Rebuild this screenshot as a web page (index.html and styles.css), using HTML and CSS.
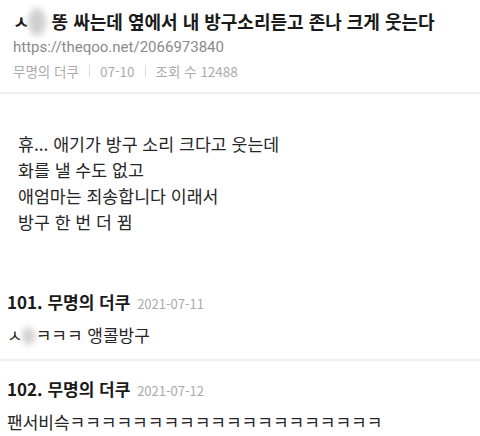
FILE: index.html
```html
<!DOCTYPE html>
<html lang="ko">
<head>
    <meta charset="UTF-8">
    <meta name="viewport" content="width=device-width, initial-scale=1.0">
    <title>theqoo</title>
    <link rel="stylesheet" href="styles.css">
</head>
<body>
    <div class="post-head">
        <h1 class="title">ㅅ<span class="blur"></span> 똥 싸는데 옆에서 내 방구소리듣고 존나 크게 웃는다</h1>
        <div class="url">https://theqoo.net/2066973840</div>
        <div class="meta">
            <span>무명의 더쿠</span>
            <span class="bar"></span>
            <span>07-10</span>
            <span class="bar"></span>
            <span>조회 수 12488</span>
        </div>
    </div>

    <div class="content">
        <p>휴... 애기가 방구 소리 크다고 웃는데</p>
        <p>화를 낼 수도 없고</p>
        <p>애엄마는 죄송합니다 이래서</p>
        <p>방구 한 번 더 뀜</p>
    </div>

    <ul class="comments">
        <li class="comment">
            <div class="comment-head"><b>101. 무명의 더쿠</b> <span class="date">2021-07-11</span></div>
            <div class="comment-text">ㅅ<span class="blur small"></span>ㅋㅋㅋ 앵콜방구</div>
        </li>
        <li class="comment">
            <div class="comment-head"><b>102. 무명의 더쿠</b> <span class="date">2021-07-12</span></div>
            <div class="comment-text">팬서비슥ㅋㅋㅋㅋㅋㅋㅋㅋㅋㅋㅋㅋㅋㅋㅋㅋㅋㅋㅋㅋ</div>
        </li>
    </ul>
</body>
</html>
```

FILE: styles.css
```css
body {
    font-family: 'Noto Sans CJK KR', 'Noto Sans', sans-serif;
    margin: 0;
    background-color: #ffffff;
    color: #222222;
}
.post-head {
    padding: 8px 13px 0;
    height: 84px;
    border-bottom: 2px solid #f0f0f0;
}
.title {
    font-size: 18px;
    font-weight: bold;
    line-height: 24px;
    margin: 0;
    color: #1a1a1a;
    white-space: nowrap;
}
.blur {
    display: inline-block;
    width: 18px;
    height: 28px;
    margin: 0 1px 0 -2px;
    vertical-align: -7px;
    border-radius: 50%;
    background-color: #d0d0d0;
    filter: blur(3px);
}
.blur.small {
    width: 13px;
    height: 18px;
    margin: 0 1px 0 -1px;
    vertical-align: -3px;
}
.url {
    font-family: 'Roboto', sans-serif;
    font-size: 15px;
    line-height: 22px;
    color: #8a8a8a;
}
.meta {
    display: flex;
    align-items: center;
    gap: 10px;
    margin-top: 3px;
    font-size: 13.5px;
    line-height: 20px;
    color: #ababab;
}
.meta .bar {
    width: 1px;
    height: 12px;
    background-color: #dddddd;
}
.content {
    padding: 37px 18px 0;
    height: 143px;
}
.content p {
    margin: 0;
    font-size: 17.3px;
    line-height: 26px;
    color: #262626;
}
.comments {
    list-style: none;
    margin: 0;
    padding: 0;
}
.comment {
    padding: 15px 0 11px 7px;
    border-bottom: 2px solid #f0f0f0;
}
.comment:last-child {
    border-bottom: none;
}
.comment-head {
    font-size: 17px;
    line-height: 26px;
    color: #1a1a1a;
}
.comment-head .date {
    font-size: 13px;
    color: #aaaaaa;
    margin-left: 2px;
}
.comment-text {
    margin-top: 5px;
    font-size: 17px;
    line-height: 26px;
    color: #262626;
    white-space: nowrap;
}
```
